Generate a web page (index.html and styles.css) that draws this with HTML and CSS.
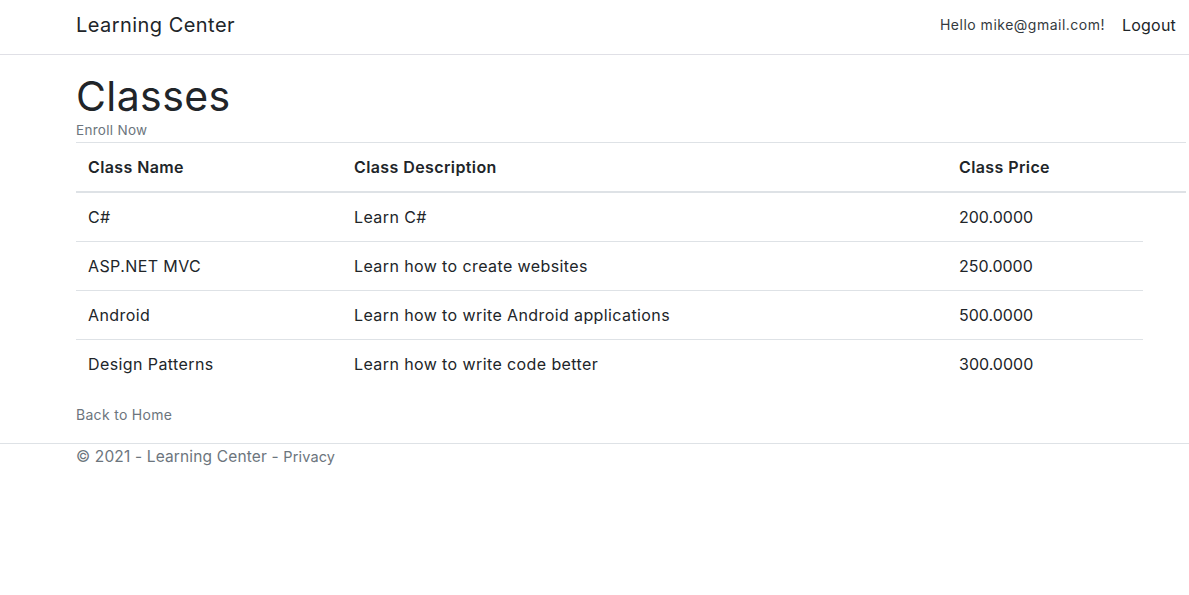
FILE: index.html
```html
<!DOCTYPE html>
<html lang="en">
<head>
<meta charset="utf-8">
<title>Classes - Learning Center</title>
<link rel="stylesheet" href="styles.css">
</head>
<body>
<header class="topbar">
  <div class="container nav">
    <a class="brand" href="#">Learning Center</a>
    <div class="nav-right">
      <span class="hello">Hello mike@gmail.com!</span>
      <a class="logout" href="#">Logout</a>
    </div>
  </div>
</header>
<main class="container main">
  <h1 class="title">Classes</h1>
  <a class="enroll" href="#">Enroll Now</a>
  <table class="classes">
    <thead>
      <tr><th class="c1">Class Name</th><th class="c2">Class Description</th><th class="c3">Class Price</th><th class="c4"></th></tr>
    </thead>
    <tbody>
      <tr><td>C#</td><td>Learn C#</td><td class="price">200.0000</td></tr>
      <tr><td>ASP.NET MVC</td><td>Learn how to create websites</td><td class="price">250.0000</td></tr>
      <tr><td>Android</td><td>Learn how to write Android applications</td><td class="price">500.0000</td></tr>
      <tr><td>Design Patterns</td><td>Learn how to write code better</td><td class="price">300.0000</td></tr>
    </tbody>
  </table>
  <a class="back" href="#">Back to Home</a>
</main>
<footer class="footer">
  <div class="container">© 2021 - Learning Center - <a class="privacy" href="#">Privacy</a></div>
</footer>
</body>
</html>
```
FILE: styles.css
```css
* { box-sizing: border-box; }
body {
  margin: 0;
  font-family: "Inter", "Open Sans", sans-serif;
  color: #212529;
  background: #fff;
}
a { text-decoration: none; }
.container {
  width: 1110px;
  margin-left: 76px;
}
.topbar {
  border-bottom: 1px solid #e0e0e6;
  height: 55px;
}
.nav {
  display: flex;
  align-items: center;
  justify-content: space-between;
  height: 50px;
}
.brand {
  font-size: 20px;
  color: #212529;
  letter-spacing: 0.45px;
}
.nav-right {
  display: flex;
  align-items: center;
  gap: 17px;
  padding-right: 10px;
}
.hello {
  font-size: 14px;
  color: #343a40;
  letter-spacing: 0.5px;
  position: relative;
  top: -1px;
}
.logout {
  font-size: 16px;
  color: #212529;
  letter-spacing: 0.2px;
}
.main {
  padding-top: 17px;
}
.title {
  margin: 0;
  font-size: 41px;
  font-weight: 400;
  line-height: 48px;
  letter-spacing: 0.4px;
}
.enroll {
  display: block;
  font-size: 13.5px;
  color: #6c757d;
  line-height: 22px;
  margin-top: -1px;
  letter-spacing: 0.3px;
}
.classes {
  width: 1110px;
  border-collapse: collapse;
  margin-top: 1px;
  font-size: 16px;
  letter-spacing: 0.4px;
}
.classes th, .classes td {
  text-align: left;
  padding: 12px;
  line-height: 24px;
  border-top: 1px solid #dee2e6;
}
.classes th {
  font-weight: 600;
  border-bottom: 2px solid #dee2e6;
}
.classes .price { letter-spacing: 0; }
.c1 { width: 266px; }
.c2 { width: 605px; }
.c3 { width: 196px; }
.c4 { width: 43px; }
.back {
  display: block;
  margin-top: 16px;
  font-size: 14px;
  color: #6c757d;
  line-height: 22px;
  letter-spacing: 0.3px;
}
.footer {
  margin-top: 17px;
  border-top: 1px solid #dee2e6;
  font-size: 15.5px;
  color: #6c757d;
  line-height: 24px;
  letter-spacing: 0.15px;
  padding-top: 1px;
}
.privacy {
  color: #6c757d;
  font-size: 14.5px;
}
```
